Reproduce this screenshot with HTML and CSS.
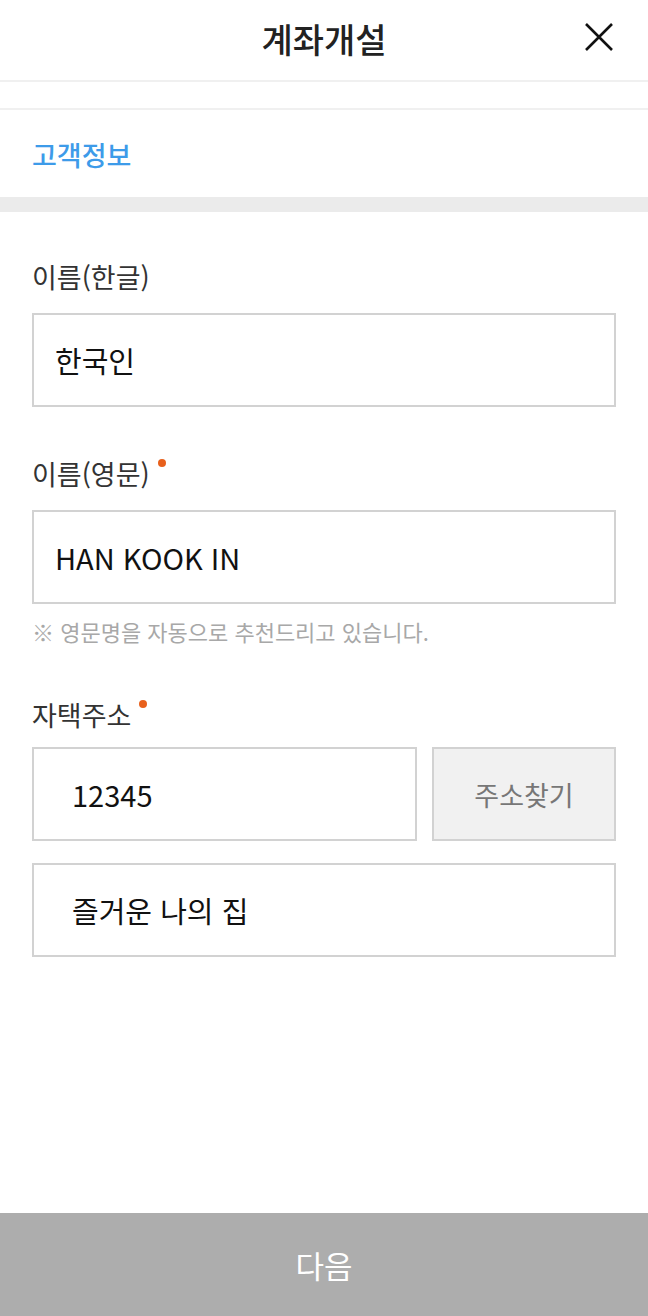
FILE: index.html
```html
<!DOCTYPE html>
<html lang="ko">
<head>
  <meta charset="UTF-8">
  <meta name="viewport" content="width=device-width, initial-scale=1.0">
  <title>계좌개설</title>
  <link rel="stylesheet" href="styles.css">
</head>
<body>
  <!-- 상단 헤더 -->
  <header class="top-bar">
    <h1>계좌개설</h1>
    <button type="button" class="btn-close" aria-label="닫기">
      <svg width="30" height="30" viewBox="0 0 30 30">
        <path d="M2 2 L28 28 M28 2 L2 28" stroke="#111" stroke-width="2.6" fill="none"/>
      </svg>
    </button>
  </header>
  <div class="sub-band"></div>

  <div class="section-title">고객정보</div>
  <div class="divider"></div>

  <!-- 입력 폼 -->
  <main class="form">
    <div class="form-group">
      <label for="name-ko">이름(한글)</label>
      <input type="text" id="name-ko" value="한국인">
    </div>
    <div class="form-group">
      <label for="name-en" class="required">이름(영문)</label>
      <input type="text" id="name-en" value="HAN KOOK IN">
      <p class="hint">※ 영문명을 자동으로 추천드리고 있습니다.</p>
    </div>
    <div class="form-group address">
      <label for="zip" class="required">자택주소</label>
      <div class="zip-row">
        <input type="text" id="zip" value="12345">
        <button type="button" class="btn-search">주소찾기</button>
      </div>
      <input type="text" id="addr" value="즐거운 나의 집">
    </div>
  </main>

  <button type="button" class="btn-next">다음</button>
</body>
</html>
```

FILE: styles.css
```css
* {
  margin: 0;
  padding: 0;
  box-sizing: border-box;
}
body {
  font-family: "Noto Sans CJK KR", "Noto Sans", sans-serif;
  background: #fff;
  color: #222;
  min-height: 100vh;
  display: flex;
  flex-direction: column;
}
/* 헤더 */
.top-bar {
  position: relative;
  height: 82px;
  display: flex;
  align-items: center;
  justify-content: center;
  border-bottom: 2px solid #f0f0f0;
}
.top-bar h1 {
  font-size: 34px;
  font-weight: 500;
  color: #222;
  line-height: 1;
  margin-top: -2px;
}
.btn-close {
  position: absolute;
  right: 34px;
  top: 22px;
  width: 30px;
  height: 30px;
  border: none;
  background: none;
  display: flex;
}
.sub-band {
  height: 28px;
  border-bottom: 2px solid #f0f0f0;
}
.section-title {
  height: 87px;
  padding: 25px 32px 0;
  font-size: 27px;
  font-weight: 500;
  color: #3d9be9;
  line-height: 40px;
}
.divider {
  height: 15px;
  background: #ebebeb;
}
/* 폼 */
.form {
  padding: 47px 32px 0;
  flex: 1;
}
.form-group {
  margin-bottom: 49px;
}
.form-group label {
  display: block;
  font-size: 27px;
  line-height: 36px;
  color: #333;
  margin-bottom: 18px;
}
.form-group label.required::after {
  content: '';
  display: inline-block;
  width: 8px;
  height: 8px;
  margin-left: 8px;
  border-radius: 50%;
  background: #e8601c;
  vertical-align: 18px;
}
.form-group input {
  display: block;
  width: 100%;
  height: 94px;
  border: 2px solid #d2d2d2;
  border-radius: 0;
  padding: 0 21px;
  font-family: inherit;
  font-size: 29px;
  color: #111;
  background: #fff;
  outline: none;
}
.hint {
  margin-top: 12px;
  font-size: 22px;
  line-height: 30px;
  color: #a8a8a8;
}
.address {
  margin-top: 51px;
}
.address label {
  margin-bottom: 14px;
}
.zip-row {
  display: flex;
  gap: 15px;
  margin-bottom: 22px;
}
.address input {
  padding: 0 38px;
}
.zip-row input {
  flex: 1;
}
.btn-search {
  width: 184px;
  height: 94px;
  border: 2px solid #d2d2d2;
  background: #f1f1f1;
  font-family: inherit;
  font-size: 27px;
  color: #777;
}
/* 하단 버튼 */
.btn-next {
  height: 103px;
  width: 100%;
  border: none;
  background: #adadad;
  color: #fff;
  font-family: inherit;
  font-size: 31px;
}
```
